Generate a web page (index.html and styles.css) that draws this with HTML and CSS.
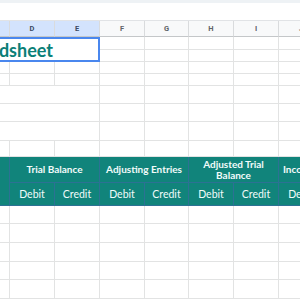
FILE: index.html
```html
<!DOCTYPE html>
<html>
<head>
	<title>Spreadsheet</title>
	<link rel="stylesheet" href="styles.css">
</head>
<body>
	<div class="toolbar"></div>
	<div class="formula-bar"></div>

	<div class="sheet">
		<!-- column headers -->
		<div class="col-head selected"></div>
		<div class="col-head selected">D</div>
		<div class="col-head selected">E</div>
		<div class="col-head">F</div>
		<div class="col-head">G</div>
		<div class="col-head">H</div>
		<div class="col-head">I</div>
		<div class="col-head">J</div>
		<div class="col-head">K</div>

		<!-- rows 1-2 : title -->
		<div class="cell title"><span>Spreadsheet</span></div>
		<div class="cell"></div><div class="cell"></div><div class="cell"></div><div class="cell"></div><div class="cell"></div><div class="cell"></div>
		<div class="cell"></div><div class="cell"></div><div class="cell"></div><div class="cell"></div><div class="cell"></div><div class="cell"></div>

		<!-- rows 3-4 -->
		<div class="cell"></div><div class="cell"></div><div class="cell"></div><div class="cell"></div><div class="cell"></div><div class="cell"></div><div class="cell"></div><div class="cell"></div><div class="cell"></div>
		<div class="cell"></div><div class="cell"></div><div class="cell"></div><div class="cell"></div><div class="cell"></div><div class="cell"></div><div class="cell"></div><div class="cell"></div><div class="cell"></div>

		<!-- rows 5-7 : merged across C:E -->
		<div class="cell wide"></div><div class="cell"></div><div class="cell"></div><div class="cell"></div><div class="cell"></div><div class="cell"></div><div class="cell"></div>
		<div class="cell wide"></div><div class="cell"></div><div class="cell"></div><div class="cell"></div><div class="cell"></div><div class="cell"></div><div class="cell"></div>
		<div class="cell wide"></div><div class="cell"></div><div class="cell"></div><div class="cell"></div><div class="cell"></div><div class="cell"></div><div class="cell"></div>

		<!-- row 8 -->
		<div class="cell"></div><div class="cell"></div><div class="cell"></div><div class="cell"></div><div class="cell"></div><div class="cell"></div><div class="cell"></div><div class="cell"></div><div class="cell"></div>

		<!-- table header -->
		<div class="th th-side"></div>
		<div class="th th-group">Trial Balance</div>
		<div class="th th-group">Adjusting Entries</div>
		<div class="th th-group">Adjusted Trial Balance</div>
		<div class="th th-group">Income Statement</div>
		<div class="th th-sub">Debit</div>
		<div class="th th-sub">Credit</div>
		<div class="th th-sub">Debit</div>
		<div class="th th-sub">Credit</div>
		<div class="th th-sub">Debit</div>
		<div class="th th-sub">Credit</div>
		<div class="th th-sub">Debit</div>
		<div class="th th-sub">Credit</div>

		<!-- empty rows -->
		<div class="cell"></div><div class="cell"></div><div class="cell"></div><div class="cell"></div><div class="cell"></div><div class="cell"></div><div class="cell"></div><div class="cell"></div><div class="cell"></div>
		<div class="cell"></div><div class="cell"></div><div class="cell"></div><div class="cell"></div><div class="cell"></div><div class="cell"></div><div class="cell"></div><div class="cell"></div><div class="cell"></div>
		<div class="cell"></div><div class="cell"></div><div class="cell"></div><div class="cell"></div><div class="cell"></div><div class="cell"></div><div class="cell"></div><div class="cell"></div><div class="cell"></div>
		<div class="cell"></div><div class="cell"></div><div class="cell"></div><div class="cell"></div><div class="cell"></div><div class="cell"></div><div class="cell"></div><div class="cell"></div><div class="cell"></div>
		<div class="cell"></div><div class="cell"></div><div class="cell"></div><div class="cell"></div><div class="cell"></div><div class="cell"></div><div class="cell"></div><div class="cell"></div><div class="cell"></div>
	</div>
</body>
</html>
```

FILE: styles.css
```css
body {
	margin: 0;
	width: 300px;
	height: 300px;
	overflow: hidden;
	background: #fff;
	font-family: Lato, "Open Sans", sans-serif;
}

.toolbar {
	height: 3px;
	background: #eef2f5;
}

.formula-bar {
	height: 17px;
	border-bottom: 1px solid #e1e3e6;
	background: #fff;
}

.sheet {
	display: grid;
	width: 369px;
	grid-template-columns: 10px 45px 45px 45px 44px 45px 45px 45px 45px;
	grid-template-rows: 16px 13px 12px 12px 12px 18px 18px 19px 16px 26px 23px 18px 19px 19px 18px 19px;
}

.col-head {
	display: flex;
	align-items: center;
	justify-content: center;
	background: #f8f9fa;
	border-right: 1px solid #d9dbdd;
	border-bottom: 1px solid #c4c7c9;
	color: #5f6368;
	font-family: Roboto, sans-serif;
	font-size: 7.5px;
	font-weight: bold;
}

.col-head.selected {
	background: #d3e3fd;
	color: #3b4a63;
}

.cell {
	border-right: 1px solid #e2e3e3;
	border-bottom: 1px solid #e2e3e3;
}

.title {
	grid-column: 1 / 4;
	grid-row: span 2;
	display: flex;
	align-items: center;
	justify-content: flex-end;
	padding-right: 45px;
	border: 2px solid #4a87ee;
	border-left: none;
	overflow: hidden;
	white-space: nowrap;
	color: #0b7f77;
	font-size: 18px;
	font-weight: bold;
}

.wide {
	grid-column: span 3;
}

.th {
	display: flex;
	align-items: center;
	justify-content: center;
	text-align: center;
	background: #11847b;
	border-right: 1px solid #2c7194;
	border-bottom: 1px solid #2c7194;
	color: #f2fbfa;
	font-size: 10px;
	line-height: 11px;
}

.th-side {
	grid-row: span 2;
}

.th-group {
	grid-column: span 2;
	padding: 0 2px;
	font-weight: bold;
}

.th-sub {
	font-size: 10.5px;
}
```
